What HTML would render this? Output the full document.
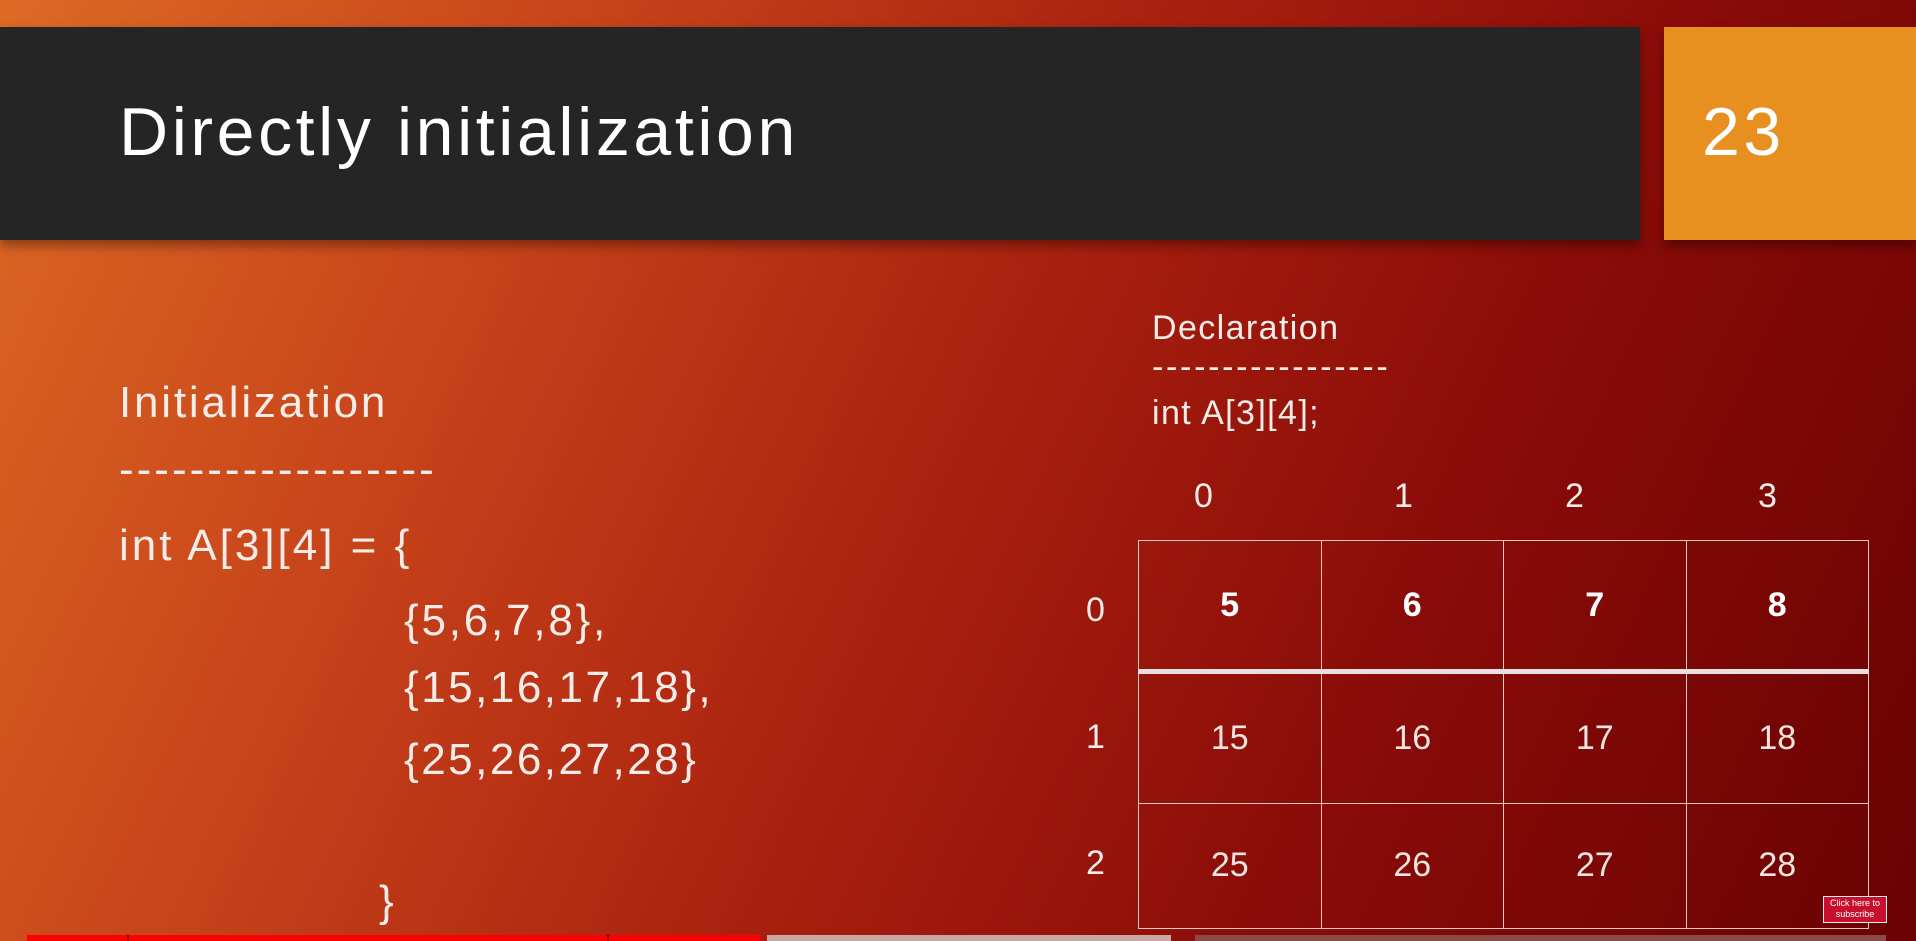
<!DOCTYPE html>
<html><head><meta charset="utf-8"><style>
html,body{margin:0;padding:0}
body{width:1916px;height:941px;overflow:hidden;position:relative;font-family:"Liberation Sans Narrow","Liberation Sans",sans-serif;color:#fff;
background:linear-gradient(115deg,#dc6a24 0%,#c8441a 25%,#a9200f 50%,#8a0c08 72%,#6a0203 100%);}
.a{position:absolute;white-space:nowrap;line-height:1}
.bar{position:absolute;left:0;top:27px;width:1640px;height:213px;background:#252525;box-shadow:0 6px 10px rgba(0,0,0,.35)}
.num{position:absolute;left:1664px;top:27px;width:252px;height:213px;background:#e8901f;box-shadow:0 6px 10px rgba(0,0,0,.35)}
.t{font-size:68px;letter-spacing:3.6px}
.b{font-size:44px;color:#f3ece8;letter-spacing:2.8px}
.s{font-size:34px;color:#f3ece8;letter-spacing:1.4px}
table{position:absolute;left:1138px;top:540px;width:731px;height:389px;border-collapse:collapse}
td{border:1.5px solid #e9c8c0;text-align:center;font-size:34px;color:#f0e4e0;width:25%}
tr.r0 td{border-bottom:5px solid #e8e0e0;font-weight:bold;color:#fff}
</style></head><body>
<div class="bar"></div><div class="num"></div>
<div class="a t" style="left:119px;top:98px">Directly initialization</div>
<div class="a t" style="left:1702px;top:98px">23</div>
<div class="a b" style="left:119px;top:381px">Initialization</div>
<div class="a b" style="left:119px;top:448px;letter-spacing:3px">------------------</div>
<div class="a b" style="left:119px;top:524px;letter-spacing:3px">int A[3][4] = {</div>
<div class="a b" style="left:404px;top:599px">{5,6,7,8},</div>
<div class="a b" style="left:404px;top:666px;letter-spacing:2.5px">{15,16,17,18},</div>
<div class="a b" style="left:404px;top:738px;letter-spacing:2.5px">{25,26,27,28}</div>
<div class="a b" style="left:379px;top:880px">}</div>
<div class="a s" style="left:1152px;top:311px">Declaration</div>
<div class="a s" style="left:1152px;top:350px;letter-spacing:2.7px">-----------------</div>
<div class="a s" style="left:1152px;top:396px">int A[3][4];</div>
<div class="a s" style="left:1194px;top:479px">0</div>
<div class="a s" style="left:1394px;top:479px">1</div>
<div class="a s" style="left:1565px;top:479px">2</div>
<div class="a s" style="left:1758px;top:479px">3</div>
<div class="a s" style="left:1086px;top:593px">0</div>
<div class="a s" style="left:1086px;top:720px">1</div>
<div class="a s" style="left:1086px;top:846px">2</div>
<table>
<tr class="r0"><td>5</td><td>6</td><td>7</td><td>8</td></tr>
<tr><td>15</td><td>16</td><td>17</td><td>18</td></tr>
<tr><td>25</td><td>26</td><td>27</td><td>28</td></tr>
</table>
<div class="a" style="left:1823px;top:896px;width:62px;height:24px;background:#c8102e;border:1px solid #eee;font-size:9px;text-align:center;line-height:11px;padding-top:1px">Click here to<br>subscribe</div>
<div class="a" style="left:27px;top:935px;width:733px;height:6px;background:#f00"></div>
<div class="a" style="left:127px;top:935px;width:2px;height:6px;background:#800"></div>
<div class="a" style="left:607px;top:935px;width:2px;height:6px;background:#800"></div>
<div class="a" style="left:767px;top:935px;width:404px;height:6px;background:#c8a8a0"></div>
<div class="a" style="left:1195px;top:935px;width:691px;height:6px;background:#8a4a46"></div>
</body></html>
